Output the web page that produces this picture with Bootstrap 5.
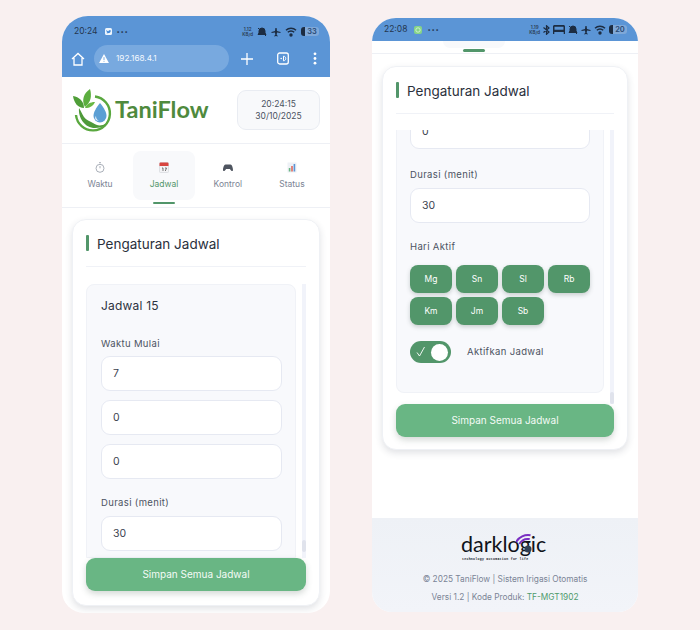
<!DOCTYPE html>
<html lang="id">
<head>
<meta charset="utf-8">
<title>TaniFlow</title>
<link href="https://cdn.jsdelivr.net/npm/bootstrap@5.3.0/dist/css/bootstrap.min.css" rel="stylesheet">
<style>
html,body{height:630px;overflow:hidden}
body{background:#f9f0f0;font-family:Inter,"Liberation Sans",sans-serif;color:#2d3340}
.stage{width:700px;height:630px;padding:16px 62px 0;gap:42px}
.phone{background:#fff;overflow:hidden;border-radius:26px 26px 22px 22px;display:flex;flex-direction:column}
.phone-a{width:268px;height:597px}
.phone-b{width:266px;height:594px;margin-top:2px;border-radius:24px 24px 20px 20px}
.chrome{background:#5b95d6;flex:none}
.chrome-a{height:61px}
.chrome-b{height:23px}
.stat{height:28px;padding:3px 11px 0 12px;font-size:8.5px;color:#24364f}
.chrome-b .stat{height:23px;padding:0 11px 0 12px}
.stat-ic{margin:0 5px 0 7px;flex:none}
.stat-dots{font-size:6px;letter-spacing:.6px;line-height:6px}
.kb{font-size:4.5px;line-height:5px;text-align:center;font-weight:600;color:#2a3b52}
.batt{width:18px;height:9px;background:#7fa8d8;border-radius:3px;border-left:4px solid #1c2c42;font-size:7.5px;line-height:9px;text-align:center;color:#2a4a74;font-weight:600}
.tool{height:33px;padding:0 13px 4px 9px}
.url{width:135px;height:27px;margin-left:9px;border-radius:14px;background:#78a9df;color:#f3f8fe;font-size:8.2px;padding-left:5px;gap:7px}
.tool-gap{flex:1}
.logo-bar{height:67px;padding:0 10px 0 11px;border-bottom:1px solid #eef0f5;flex:none}
.logo-text{font-family:Lato,"Liberation Sans",sans-serif;font-weight:700;font-size:23.5px;color:#4f8a3d;margin-left:2px;line-height:1}
.clock{width:83px;height:40px;background:#f8f9fb;border:1px solid #e9ecf2;border-radius:9px;font-size:8.5px;line-height:12px;color:#4a5160;padding-top:7px}
.tabs{height:64px;padding:7px 6px 0;border-bottom:1px solid #eef0f5;flex:none}
.tabby{width:64.5px;height:49px;font-size:8.5px;color:#7b8494;position:relative;padding-top:11px;border-radius:8px;gap:5px}
.tabby.on{background:#f8f9fb;color:#52966a;width:62px;margin:0 1px}
.tabby.on::after{content:"";position:absolute;left:20px;bottom:-4px;width:22px;height:2.5px;border-radius:2px;background:#52966a}
.sliver{height:13px;border-bottom:1px solid #eef0f5;flex:none;position:relative}
.sliver i{display:block;width:62px;height:7px;margin-left:71px;background:#f8f9fb;border-radius:0 0 8px 8px}
.sliver b{position:absolute;left:91px;top:8px;width:22px;height:2.5px;border-radius:2px;background:#52966a}
.panelcard{background:#fff;border:1px solid #eff1f5;border-radius:14px;box-shadow:0 3px 7px rgba(40,50,70,.14);flex:none}
.panelcard-a{width:248px;height:387px;margin:11px 0 0 10px;padding:0 13px}
.panelcard-b{width:246px;height:384px;margin:12px 0 0 10px;padding:0 13px}
.ttl{height:47px;border-bottom:1px solid #f0f2f7;font-size:13.5px;color:#2a303c;font-weight:400;margin:0;padding:2px 0 0 11px;position:relative;display:flex;align-items:center;flex:none}
.ttl::before{content:"";position:absolute;left:0;top:15px;width:3px;height:16px;background:#52966a;border-radius:1px}
.scrolly{gap:6px}
.scrolly-a{height:274px;margin-top:17px}
.scrolly-b{height:274px;margin-top:16px}
.track{width:4px;background:#f1f3fa;position:relative;flex:none}
.thumb{position:absolute;left:0;width:4px;height:12px;border-radius:2px;background:#e0e3ec}
.sched{background:#f8f9fc;border:1px solid #f0f2f7;border-radius:8px 8px 0 0;padding:0 13px 0 14px;overflow:hidden;flex:1;min-width:0}
.sched-a{width:210px}
.sched-b{width:208px;height:263px;border-radius:0 0 8px 8px;border-top:0;flex:none;padding-left:13px}
.sched h5{font-size:12px;font-weight:400;margin:13px 0 24px;line-height:16px;color:#2d3340;letter-spacing:.2px}
.lbl{display:block;font-size:9.5px;line-height:12px;color:#4c5362;letter-spacing:.35px;margin:0 0 6px}
.sched-b .lbl,.sched-a .gap-lbl{margin-bottom:7px}
.sched-b .hari{margin-bottom:12px}
.sched-b .lbl-inline{margin:0}
.inp{display:flex;align-items:center;height:35px;background:#fff;border:1.5px solid #e6e9f2;border-radius:9px;font-size:10.5px;color:#3c4350;padding-left:11px;margin-bottom:9px}
.inp.cut{margin-top:-16px;margin-bottom:20px}
.gap-lbl{margin-top:18px}
.days{display:grid;grid-template-columns:repeat(4,42px);grid-auto-rows:28px;gap:4px}
.dayb{background:#52966a;color:#fff;border:0;border-radius:8px;font-size:8.5px;box-shadow:0 2px 4px rgba(60,80,70,.25);padding:0;display:flex;align-items:center;justify-content:center}
.toggle{width:41px;height:22px;border-radius:11px;background:#52966a;position:relative;padding:5px 0 0 6px;flex:none;display:block}
.toggle svg{display:block}
.toggle::after{content:"";position:absolute;right:3px;top:2.5px;width:17px;height:17px;border-radius:50%;background:#fff}
.save{width:100%;height:33px;background:#69b684;color:#f4fbf6;border:0;border-radius:9px;font-size:10px;box-shadow:0 3px 6px rgba(60,80,70,.22);padding:0;flex:none}
.foot{margin-top:auto;height:94px;background:linear-gradient(#eef1f6,#f2f4f9);font-size:8.3px;color:#7b8496;flex:none;padding-top:9px}
.foot p{margin:0;line-height:18px}
.foot .foot-first{margin-top:7px}
.foot em{font-style:normal;color:#4f9a6c}
.dl{position:relative;width:90px;height:36px;color:#10131a;line-height:1}
.dl-word{font-family:Lato,"Liberation Sans",sans-serif;font-size:21.5px;font-weight:400;position:absolute;left:1px;top:7px}
.dl-sub{position:absolute;left:2px;top:29.500px;font-size:3.2px;line-height:4px;letter-spacing:.3px;white-space:nowrap;font-family:"Liberation Mono",monospace;font-weight:700}
.dl svg{position:absolute;left:56px;top:6px}
</style>
</head>
<body>
<div class="stage d-flex align-items-start">

<div class="phone phone-a">
  <div class="chrome chrome-a">
    <div class="stat d-flex align-items-center">
      <span>20:24</span>
      <svg class="stat-ic" width="7" height="7" viewBox="0 0 7 7"><rect width="7" height="7" rx="1.500" fill="#eef5fc"/><path d="M1.300 2c1 1 1.500 1.200 2.200 1.200.1-1 1.300-1.400 2-.7l.6-.2-.4.7C5.600 4.700 3.400 6 1.200 4.900c.7 0 1-.2 1.300-.5C1.700 4 1.300 3 1.300 2z" fill="#3f86d6"/></svg>
      <span class="stat-dots">•••</span>
      <span class="ms-auto d-flex align-items-center gap-1">
        <span class="kb">1.12<br>KB/d</span>
        <svg width="10" height="10" viewBox="0 0 10 10"><path d="M5 1a3 3 0 0 1 3 3v2l1 1.500H1L2 6V4a3 3 0 0 1 3-3zM1 1l8 8" fill="#1c2c42" stroke="#1c2c42"/></svg>
        <svg width="10" height="10" viewBox="0 0 10 10"><path d="M5.600 1 6 4l3.500 1v1L6 5.500 5.700 8l1 .7v.7L5 9l-1.700.4v-.7l1-.7L4 5.500.5 6V5L4 4l.4-3z" fill="#1c2c42"/></svg>
        <svg width="12" height="10" viewBox="0 0 12 10" fill="none" stroke="#1c2c42" stroke-width="1.400"><path d="M1 3.300a7 7 0 0 1 10 0M2.800 5.300a4.500 4.500 0 0 1 6.400 0"/><circle cx="6" cy="8" r="1" fill="#1c2c42"/></svg>
        <span class="batt">33</span>
      </span>
    </div>
    <div class="tool d-flex align-items-center">
      <svg width="14" height="14" viewBox="0 0 14 14" fill="none" stroke="#fff" stroke-width="1.300"><path d="M1 7 7 1.500 13 7M3 6v7h8V6"/></svg>
      <div class="url d-flex align-items-center">
        <svg width="10" height="9" viewBox="0 0 11 10"><path d="M5.500 0 11 10H0z" fill="#fff"/><path d="M5.500 3.500v3.200M5.500 7.600v1" stroke="#78a9df" stroke-width="1.100"/></svg>
        <span>192.168.4.1</span>
      </div>
      <div class="tool-gap"></div>
      <svg width="12" height="12" viewBox="0 0 12 12" stroke="#fff" stroke-width="1.300"><path d="M6 0v12M0 6h12"/></svg>
      <svg class="ms-4" width="12" height="13" viewBox="0 0 12 13"><rect x=".7" y="1" width="10.600" height="11" rx="2" fill="none" stroke="#fff" stroke-width="1.300"/><circle cx="4.200" cy="6.500" r=".8" fill="#fff"/><path d="M6.500 4.200c3 0 3 4.600 0 4.600z" fill="none" stroke="#fff"/></svg>
      <svg style="margin-left:24px" width="4" height="13" viewBox="0 0 4 13" fill="#fff"><circle cx="2" cy="1.800" r="1.400"/><circle cx="2" cy="6.500" r="1.400"/><circle cx="2" cy="11.200" r="1.400"/></svg>
    </div>
  </div>

  <div class="logo-bar d-flex align-items-center justify-content-between">
    <div class="d-flex align-items-center">
      <svg width="40" height="44" viewBox="0 0 40 44">
        <path d="M22 8.500A17 17 0 1 1 3 27" fill="none" stroke="#5aa83f" stroke-width="2.400"/>
        <path d="M6 20c-1 10 6 20 16 20 4 0 8-1 11-4-5 2-9 2-13-1-3-2-7-3-9-6-2-3-3-6-5-9z" fill="#4f9a3a"/>
        <path d="M12 19C8 12 11 5 17 1c2 7 1 13-5 18z" fill="#5cae3f"/>
        <path d="M11 20C5 20 1 15 0 8c6 1 11 5 11 12z" fill="#4f9e38"/>
        <path d="M12 20c2-4 5-6 10-6-2 4-5 6-10 6z" fill="#68b845"/>
        <path d="M27 15c4 5 6.500 9 6.500 13a6.500 6.500 0 0 1-13 0c0-4 2.500-8 6.500-13z" fill="#5b9fd4"/>
        <path d="M23 28c0 2.500 1 4 3 4.500-3 .8-5-2-3-4.500z" fill="#fff" opacity=".85"/>
      </svg>
      <span class="logo-text">TaniFlow</span>
    </div>
    <div class="clock text-center">20:24:15<br>30/10/2025</div>
  </div>

  <div class="tabs d-flex align-items-start">
    <div class="tabby d-flex flex-column align-items-center">
      <svg width="10" height="11" viewBox="0 0 10 11" fill="none" stroke="#a9afb8"><circle cx="5" cy="6.300" r="4"/><path d="M5 6.300V4M4 .7h2" /></svg>
      <span>Waktu</span>
    </div>
    <div class="tabby on d-flex flex-column align-items-center">
      <svg width="10" height="11" viewBox="0 0 10 11"><rect x=".5" y=".5" width="9" height="10" rx="1" fill="#f3f3f5" stroke="#c9ccd2" stroke-width=".5"/><path d="M.5 1.500a1 1 0 0 1 1-1h7a1 1 0 0 1 1 1V4H.5z" fill="#d8453f"/><path d="M3 6h1v3M6 6h1.500L6.300 9" stroke="#444" stroke-width=".7" fill="none"/></svg>
      <span>Jadwal</span>
    </div>
    <div class="tabby d-flex flex-column align-items-center">
      <svg width="10" height="11" viewBox="0 0 10 11"><path d="M2.500 2.500h5C9 2.500 10 6 10 8c0 1-1 1.500-1.700.7L6.800 7H3.200L1.700 8.700C1 9.500 0 9 0 8c0-2 1-5.500 2.500-5.500z" fill="#4f5560"/></svg>
      <span>Kontrol</span>
    </div>
    <div class="tabby d-flex flex-column align-items-center">
      <svg width="10" height="11" viewBox="0 0 10 11"><rect x=".5" y=".5" width="9" height="10" fill="#eef1f6"/><rect x="1.800" y="6" width="1.600" height="3.500" fill="#69b684"/><rect x="4.200" y="4" width="1.600" height="5.500" fill="#e0685e"/><rect x="6.600" y="2" width="1.600" height="7.500" fill="#5b95d6"/></svg>
      <span>Status</span>
    </div>
  </div>

  <div class="panelcard panelcard-a d-flex flex-column">
    <h2 class="ttl">Pengaturan Jadwal</h2>
    <div class="scrolly scrolly-a d-flex flex-none">
      <div class="sched sched-a">
        <h5>Jadwal 15</h5>
        <label class="lbl">Waktu Mulai</label>
        <div class="inp">7</div>
        <div class="inp">0</div>
        <div class="inp">0</div>
        <label class="lbl gap-lbl">Durasi (menit)</label>
        <div class="inp">30</div>
      </div>
      <div class="track"><span class="thumb" style="top:256px"></span></div>
    </div>
    <button class="save" type="button">Simpan Semua Jadwal</button>
  </div>
</div>

<div class="phone phone-b">
  <div class="chrome chrome-b">
    <div class="stat d-flex align-items-center">
      <span>22:08</span>
      <svg class="stat-ic" width="8" height="8" viewBox="0 0 8 8"><rect width="8" height="8" rx="2" fill="#86d487"/><circle cx="4" cy="4" r="2.200" fill="none" stroke="#dff5df" stroke-width=".8"/></svg>
      <span class="stat-dots">•••</span>
      <span class="ms-auto d-flex align-items-center" style="gap:3px">
        <span class="kb">1.19<br>KB/d</span>
        <svg width="7" height="10" viewBox="0 0 7 10" fill="none" stroke="#1c2c42" stroke-width="1.200"><path d="M.5 2.500 6 7 3.500 9.300V.7L6 3 .5 7.500"/></svg>
        <svg width="12" height="9" viewBox="0 0 12 9"><path d="M0 9V1.500C0 .7.700 0 1.500 0h9c.8 0 1.500.7 1.500 1.500V9h-1.300V7H1.300v2zM1.500 4.800h9v-3h-9z" fill="#1c2c42"/></svg>
        <svg width="10" height="10" viewBox="0 0 10 10"><path d="M5 1a3 3 0 0 1 3 3v2l1 1.500H1L2 6V4a3 3 0 0 1 3-3zM1 1l8 8" fill="#1c2c42" stroke="#1c2c42"/></svg>
        <svg width="10" height="10" viewBox="0 0 10 10"><path d="M5.600 1 6 4l3.500 1v1L6 5.500 5.700 8l1 .7v.7L5 9l-1.700.4v-.7l1-.7L4 5.500.5 6V5L4 4l.4-3z" fill="#1c2c42"/></svg>
        <svg width="12" height="10" viewBox="0 0 12 10" fill="none" stroke="#1c2c42" stroke-width="1.400"><path d="M1 3.300a7 7 0 0 1 10 0M2.800 5.300a4.500 4.500 0 0 1 6.400 0"/><circle cx="6" cy="8" r="1" fill="#1c2c42"/></svg>
        <span class="batt">20</span>
      </span>
    </div>
  </div>
  <div class="sliver"><i></i><b></b></div>
  <div class="panelcard panelcard-b d-flex flex-column">
    <h2 class="ttl">Pengaturan Jadwal</h2>
    <div class="scrolly scrolly-b d-flex">
      <div class="sched sched-b">
        <div class="inp cut">0</div>
        <label class="lbl">Durasi (menit)</label>
        <div class="inp">30</div>
        <label class="lbl gap-lbl hari">Hari Aktif</label>
        <div class="days">
          <span class="dayb">Mg</span><span class="dayb">Sn</span><span class="dayb">Sl</span><span class="dayb">Rb</span>
          <span class="dayb">Km</span><span class="dayb">Jm</span><span class="dayb">Sb</span>
        </div>
        <div class="d-flex align-items-center mt-3">
          <span class="toggle"><svg width="10" height="11" viewBox="0 0 10 11" fill="none" stroke="#fff" stroke-width=".9"><path d="M1 6.500 3.500 10 8.500 1"/></svg></span>
          <span class="lbl lbl-inline ps-3">Aktifkan Jadwal</span>
        </div>
      </div>
      <div class="track"><span class="thumb" style="top:262px"></span></div>
    </div>
    <button class="save" type="button">Simpan Semua Jadwal</button>
  </div>
  <footer class="foot text-center">
    <div class="dl mx-auto">
      <span class="dl-word">darklogic</span>
      <span class="dl-sub">technology automation for life</span>
      <svg width="18" height="26" viewBox="0 0 18 26" fill="none">
        <path d="M0 9A14 14 0 0 1 14.500 2.200M3.300 11A10 10 0 0 1 13.700 6.100" stroke="#7a2fc2" stroke-width="2"/>
        <circle cx="12" cy="16" r="3.500" fill="#2f3f55"/>
      </svg>
    </div>
    <p class="foot-first">© 2025 TaniFlow | Sistem Irigasi Otomatis</p>
    <p>Versi 1.2 | Kode Produk: <em>TF-MGT1902</em></p>
  </footer>
</div>

</div>
<script src="https://cdn.jsdelivr.net/npm/bootstrap@5.3.0/dist/js/bootstrap.bundle.min.js"></script>
</body>
</html>
